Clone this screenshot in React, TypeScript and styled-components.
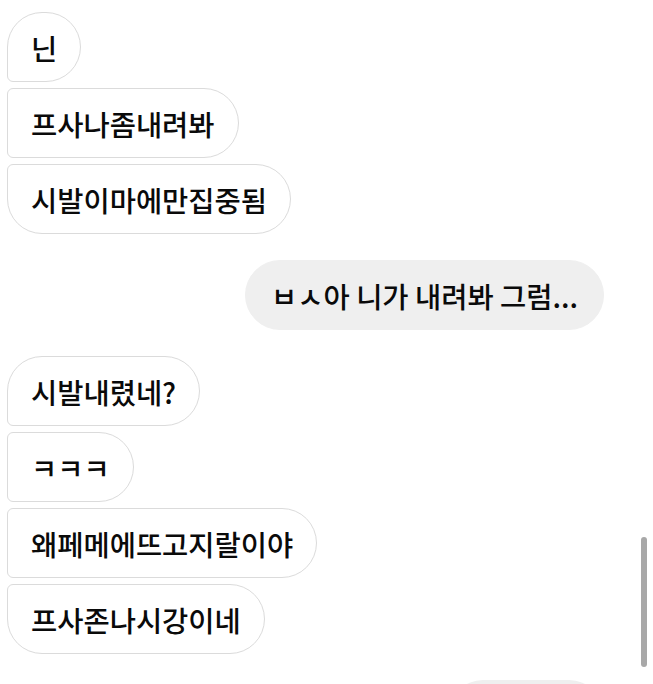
import styled, { createGlobalStyle, css } from 'styled-components';

const GlobalStyle = createGlobalStyle`
  html, body {
    margin: 0;
    padding: 0;
    background: #ffffff;
    overflow: hidden;
  }
  body {
    font-family: 'Noto Sans CJK KR', 'Noto Sans', sans-serif;
  }
`;

type Pos = 'first' | 'middle' | 'last' | 'single';

const Screen = styled.div`
  position: relative;
  width: 653px;
  height: 684px;
  overflow: hidden;
`;

const Thread = styled.div`
  display: flex;
  flex-direction: column;
  gap: 26px;
  padding: 12px 49px 0 7px;
`;

const Group = styled.div<{ $mine?: boolean }>`
  display: flex;
  flex-direction: column;
  gap: 6px;
  align-items: ${(p) => (p.$mine ? 'flex-end' : 'flex-start')};
`;

const corners = (pos: Pos) => {
  switch (pos) {
    case 'first':
      return css`border-radius: 35px 35px 35px 6px;`;
    case 'middle':
      return css`border-radius: 6px 35px 35px 6px;`;
    case 'last':
      return css`border-radius: 6px 35px 35px 35px;`;
    default:
      return css`border-radius: 35px;`;
  }
};

const Bubble = styled.div<{ $pos: Pos; $mine?: boolean }>`
  box-sizing: border-box;
  height: 70px;
  display: flex;
  align-items: center;
  padding: 0 23px;
  font-size: 28.5px;
  font-weight: 500;
  color: #0a0a0a;
  white-space: nowrap;
  ${(p) =>
    p.$mine
      ? css`
          background: #efefef;
          border: 1.5px solid #efefef;
          border-radius: 35px;
          padding: 0 25px;
        `
      : css`
          background: #ffffff;
          border: 1.5px solid #dbdbdb;
          ${corners(p.$pos)}
        `}
`;

// the next sent bubble, only its top edge shows at the bottom of the screen
const PeekBubble = styled.div`
  width: 156px;
  height: 70px;
  border-radius: 35px;
  background: #efefef;
`;

const ScrollThumb = styled.div`
  position: absolute;
  right: 6px;
  top: 537px;
  width: 6px;
  height: 130px;
  border-radius: 3px;
  background: #a8a8a8;
`;

const posOf = (i: number, n: number): Pos =>
  n === 1 ? 'single' : i === 0 ? 'first' : i === n - 1 ? 'last' : 'middle';

const groups: { mine?: boolean; lines: string[] }[] = [
  { lines: ['닌', '프사나좀내려봐', '시발이마에만집중됨'] },
  { mine: true, lines: ['ㅂㅅ아 니가 내려봐 그럼...'] },
  { lines: ['시발내렸네?', 'ㅋㅋㅋ', '왜페메에뜨고지랄이야', '프사존나시강이네'] },
];

const App = () => (
  <Screen>
    <GlobalStyle />
    <Thread>
      {groups.map((g, gi) => (
        <Group key={gi} $mine={g.mine}>
          {g.lines.map((line, i) => (
            <Bubble key={i} $mine={g.mine} $pos={posOf(i, g.lines.length)}>
              {line}
            </Bubble>
          ))}
        </Group>
      ))}
      <Group $mine>
        <PeekBubble />
      </Group>
    </Thread>
    <ScrollThumb />
  </Screen>
);

export default App;
